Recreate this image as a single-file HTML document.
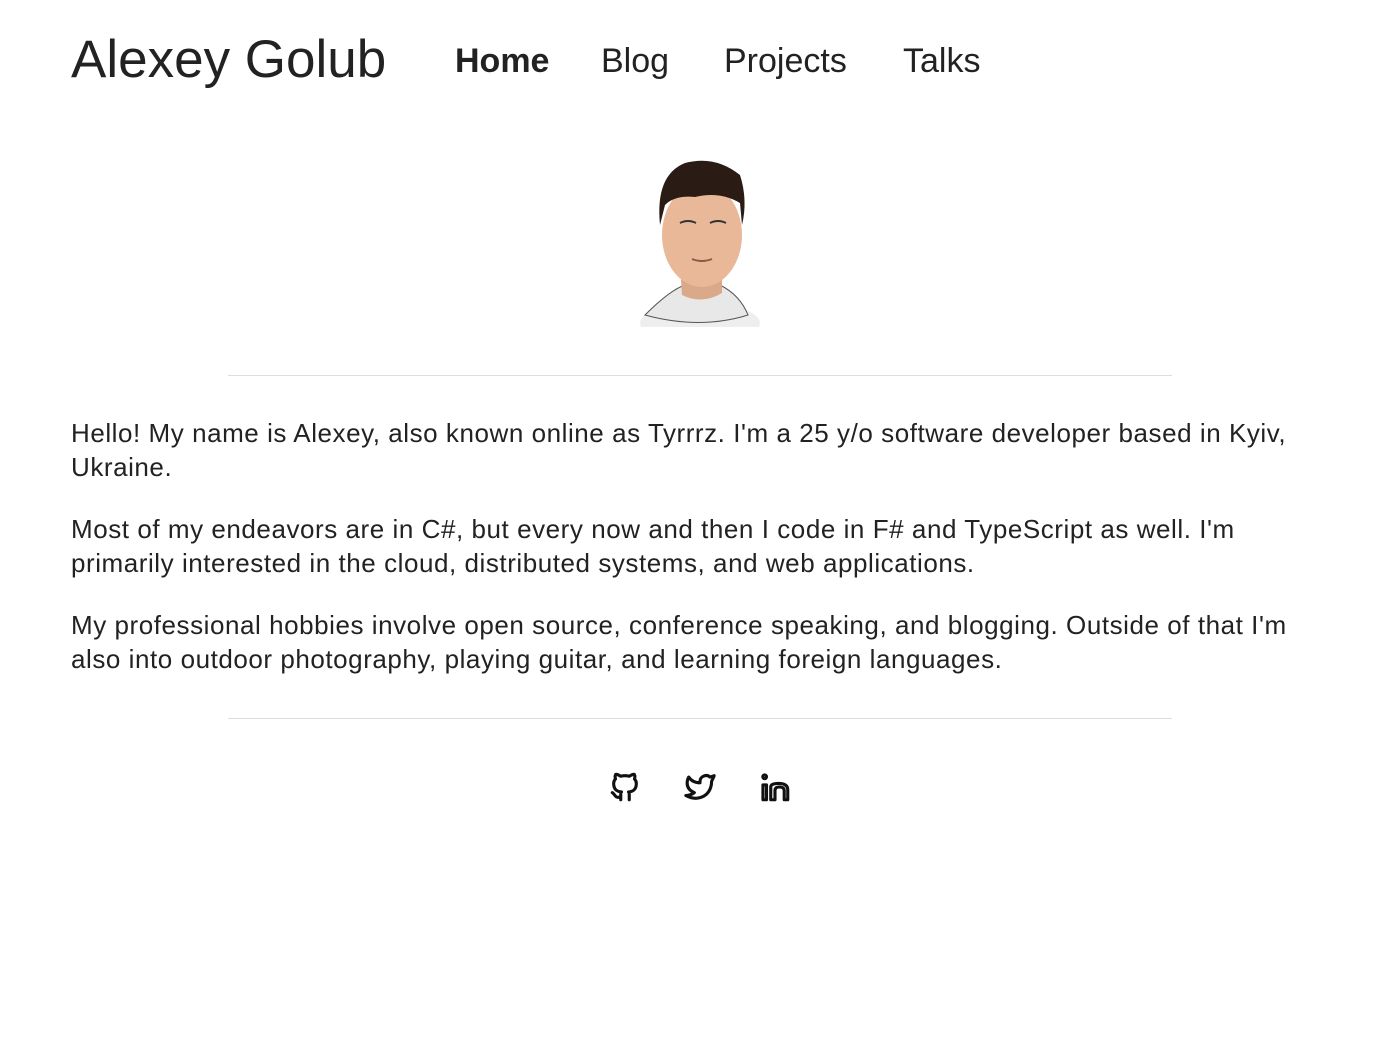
<!DOCTYPE html>
<html><head><meta charset="utf-8"><style>
body{margin:0;background:#fff;font-family:"Liberation Sans",sans-serif;color:#222;}
.hdr{position:absolute;top:29px;left:71px;font-size:53px;color:#222;}
.nav{position:absolute;top:42px;font-size:34px;color:#222;}
hr{position:absolute;left:228px;width:944px;border:0;border-top:1px solid #ddd;margin:0;}
.p{position:absolute;left:71px;width:1260px;font-size:26px;line-height:34px;color:#222;letter-spacing:0.55px;}
svg.i{position:absolute;top:770px;width:34px;height:34px;fill:none;stroke:#111;stroke-width:2.2;stroke-linecap:round;stroke-linejoin:round;}
</style></head><body>
<div class="hdr">Alexey Golub</div>
<div class="nav" style="left:455px;font-weight:bold;">Home</div>
<div class="nav" style="left:601px;">Blog</div>
<div class="nav" style="left:724px;">Projects</div>
<div class="nav" style="left:903px;">Talks</div>
<svg style="position:absolute;left:630px;top:155px" width="130" height="172" viewBox="0 0 130 172">
<ellipse cx="70" cy="168" rx="60" ry="20" fill="#eee"/>
<path d="M15 160 Q40 135 55 130 L90 130 Q110 140 118 160 Q70 175 15 160Z" fill="#e8e8e8" stroke="#555" stroke-width="1"/>
<path d="M50 110 L52 140 Q72 150 92 138 L92 110Z" fill="#d9a98a"/>
<ellipse cx="72" cy="80" rx="40" ry="52" fill="#e8b898"/>
<path d="M30 70 Q25 20 55 8 Q85 0 110 20 Q118 45 112 70 L110 48 Q90 36 65 42 Q45 40 35 50Z" fill="#2a1c14"/>
<path d="M50 68 q8 -4 16 0 M80 68 q8 -4 16 0" stroke="#333" stroke-width="2" fill="none"/>
<path d="M62 104 q10 4 20 0" stroke="#8a5a48" stroke-width="2" fill="none"/>
</svg>
<hr style="top:375px">
<div class="p" style="top:416px">Hello! My name is Alexey, also known online as Tyrrrz. I'm a 25 y/o software developer based in Kyiv, Ukraine.</div>
<div class="p" style="top:512px">Most of my endeavors are in C#, but every now and then I code in F# and TypeScript as well. I'm<br>primarily interested in the cloud, distributed systems, and web applications.</div>
<div class="p" style="top:608px">My professional hobbies involve open source, conference speaking, and blogging. Outside of that I'm also into outdoor photography, playing guitar, and learning foreign languages.</div>
<hr style="top:718px">
<svg class="i" style="left:608px" viewBox="0 0 24 24"><path d="M9 19c-4.3 1.4-4.3-2.5-6-3m12 5v-3.5c0-1 .1-1.4-.5-2 2.8-.3 5.5-1.4 5.5-6a4.6 4.6 0 0 0-1.3-3.2 4.2 4.2 0 0 0-.1-3.2s-1.1-.3-3.5 1.3a12.3 12.3 0 0 0-6.2 0C6.5 2.8 5.4 3.1 5.4 3.1a4.2 4.2 0 0 0-.1 3.2A4.6 4.6 0 0 0 4 9.5c0 4.6 2.7 5.7 5.5 6-.6.6-.6 1.2-.5 2V21"/></svg>
<svg class="i" style="left:683px" viewBox="0 0 24 24"><path d="M22 4.01c-1 .49-1.98.689-3 .99-1.121-1.265-2.783-1.335-4.38-.737S11.977 6.323 12 8v1c-3.245.083-6.135-1.395-8-4 0 0-4.182 7.433 4 11-1.872 1.247-3.739 2.088-6 2 3.308 1.803 6.913 2.423 10.034 1.517 3.58-1.04 6.522-3.723 7.651-7.742a13.84 13.84 0 0 0 .497-3.753C20.18 7.773 21.692 5.25 22 4.009z"/></svg>
<svg class="i" style="left:758px" viewBox="0 0 24 24"><path d="M3.5 10.5h2.5V21H3.5z"/><circle cx="4.7" cy="4.8" r="1.3"/><path d="M9 21V12Q9 9.5 14.5 9.5Q21 9.5 21 14V21H18.5V14.5Q18.5 12 15 12Q12 12 12 14.5V21Z"/></svg>
</body></html>
